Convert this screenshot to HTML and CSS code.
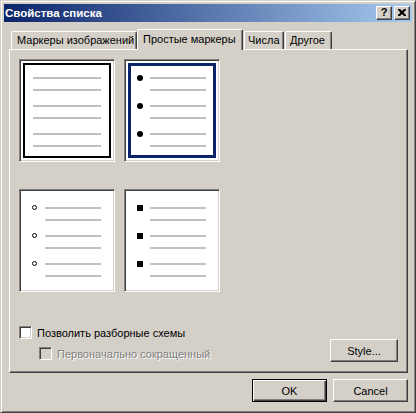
FILE: index.html
```html
<!DOCTYPE html>
<html lang="ru">
<head>
    <meta charset="UTF-8">
    <title>Свойства списка</title>
    <link rel="stylesheet" href="styles.css">
</head>
<body>
    <div class="window">
        <div class="titlebar">
            <span class="title">Свойства списка</span>
            <div class="caption-btns">
                <span class="cap-btn">?</span>
                <span class="cap-btn">
                    <svg width="8" height="7" viewBox="0 0 8 7"><path d="M0 0h2l2 2 2-2h2v1l-2.5 2.5 2.5 2.5v1h-2l-2-2-2 2h-2v-1l2.5-2.5-2.5-2.5z" fill="#000"/></svg>
                </span>
            </div>
        </div>

        <div class="client">
            <div class="tabs">
                <div class="tab tab-1">Маркеры изображений</div>
                <div class="tab tab-2 active">Простые маркеры</div>
                <div class="tab tab-3">Числа</div>
                <div class="tab tab-4">Другое</div>
            </div>

            <div class="panel">
                <div class="previews">
                    <div class="preview focus">
                        <div class="frame">
                            <div class="group"><span class="line"></span><span class="line"></span></div>
                            <div class="group"><span class="line"></span><span class="line"></span></div>
                            <div class="group"><span class="line"></span><span class="line"></span></div>
                        </div>
                    </div>
                    <div class="preview selected">
                        <div class="frame bulleted">
                            <div class="group"><span class="mark dot"></span><span class="line"></span><span class="line"></span></div>
                            <div class="group"><span class="mark dot"></span><span class="line"></span><span class="line"></span></div>
                            <div class="group"><span class="mark dot"></span><span class="line"></span><span class="line"></span></div>
                        </div>
                    </div>
                    <div class="preview">
                        <div class="frame bulleted">
                            <div class="group"><span class="mark ring"></span><span class="line"></span><span class="line"></span></div>
                            <div class="group"><span class="mark ring"></span><span class="line"></span><span class="line"></span></div>
                            <div class="group"><span class="mark ring"></span><span class="line"></span><span class="line"></span></div>
                        </div>
                    </div>
                    <div class="preview">
                        <div class="frame bulleted">
                            <div class="group"><span class="mark square"></span><span class="line"></span><span class="line"></span></div>
                            <div class="group"><span class="mark square"></span><span class="line"></span><span class="line"></span></div>
                            <div class="group"><span class="mark square"></span><span class="line"></span><span class="line"></span></div>
                        </div>
                    </div>
                </div>

                <div class="options">
                    <div class="checks">
                        <label class="check"><span class="box"></span>Позволить разборные схемы</label>
                        <label class="check sub disabled"><span class="box"></span>Первоначально сокращенный</label>
                    </div>
                    <button class="btn style-btn">Style...</button>
                </div>
            </div>

            <div class="footer">
                <button class="btn default">OK</button>
                <button class="btn">Cancel</button>
            </div>
        </div>
    </div>
</body>
</html>
```

FILE: styles.css
```css
:root {
    --face: #d4d0c8;
    --shadow: #808080;
    --dark: #404040;
    --light: #ffffff;
    --navy: #0a246a;
    --line: #c0c0c0;
}

* {
    margin: 0;
    padding: 0;
    box-sizing: border-box;
}

body {
    font-family: "Liberation Sans", Arial, sans-serif;
    font-size: 11px;
    color: #000;
    background: var(--face);
}

.window {
    width: 416px;
    height: 413px;
    background: var(--face);
    border: 1px solid;
    border-color: var(--face) var(--dark) var(--dark) var(--face);
    box-shadow: inset 1px 1px var(--light), inset -1px -1px var(--shadow);
    padding: 3px;
    display: flex;
    flex-direction: column;
}

/* заголовок окна */
.titlebar {
    height: 18px;
    background: linear-gradient(to right, var(--navy), #a6caf0);
    display: flex;
    align-items: center;
    justify-content: space-between;
    padding: 0 2px 0 1px;
}

.title {
    color: #fff;
    font-weight: bold;
    font-size: 11.5px;
}

.caption-btns {
    display: flex;
    gap: 2px;
}

.cap-btn {
    width: 16px;
    height: 14px;
    background: var(--face);
    border: 1px solid;
    border-color: var(--light) var(--dark) var(--dark) var(--light);
    box-shadow: inset -1px -1px var(--shadow);
    display: flex;
    align-items: center;
    justify-content: center;
    font-weight: bold;
    font-size: 11px;
    line-height: 1;
    padding-bottom: 1px;
}

.client {
    flex: 1;
    padding: 7px 4px 0 5px;
    display: flex;
    flex-direction: column;
}

/* вкладки */
.tabs {
    display: flex;
    height: 20px;
    padding-left: 2px;
    position: relative;
    z-index: 1;
}

.tab {
    margin-top: 2px;
    height: 18px;
    background: var(--face);
    border-top: 1px solid var(--light);
    border-left: 1px solid var(--light);
    border-right: 1px solid var(--dark);
    box-shadow: inset -1px 0 var(--shadow);
    border-radius: 2px 2px 0 0;
    padding: 2px 0 0 5px;
    white-space: nowrap;
}

.tab-1 { width: 126px; }
.tab-2 { width: 106px; }
.tab-3 { width: 40px; margin-left: 1px; padding-left: 3px; }
.tab-4 { width: 47px; margin-left: 1px; padding-left: 4px; }

.tab.active {
    margin-top: 0;
    height: 21px;
    padding-top: 3px;
}

/* панель вкладки */
.panel {
    height: 324px;
    border: 1px solid;
    border-color: var(--light) var(--dark) var(--dark) var(--light);
    box-shadow: inset -1px -1px var(--shadow);
    padding: 9px 9px 10px 9px;
    display: flex;
    flex-direction: column;
}

.previews {
    display: grid;
    grid-template-columns: 96px 96px;
    grid-auto-rows: 103px;
    column-gap: 9px;
    row-gap: 27px;
}

.preview {
    background: #fff;
    border: 1px solid;
    border-color: var(--shadow) var(--light) var(--light) var(--shadow);
    box-shadow: inset 1px 1px var(--dark), inset -1px -1px var(--face);
    padding: 1px;
    display: flex;
}

.frame {
    flex: 1;
    margin: 2px;
    border: 2px solid transparent;
    padding: 12px 0 0 8px;
    display: flex;
    flex-direction: column;
    gap: 14px;
}

.focus .frame {
    border-color: #000;
}

.selected .frame {
    border: 3px solid var(--navy);
    padding: 11px 0 0 6px;
}

.group {
    display: grid;
    grid-template-columns: 68px;
    row-gap: 10px;
}

.line {
    display: block;
    height: 2px;
    background: var(--line);
}

.bulleted {
    padding-left: 7px;
}

.selected .bulleted {
    padding-left: 6px;
}

.bulleted .group {
    grid-template-columns: 13px 56px;
}

.bulleted .line {
    grid-column: 2;
}

.mark {
    grid-row: 1;
    grid-column: 1;
    align-self: center;
}

.dot {
    width: 6px;
    height: 6px;
    margin: -2px 0;
    border-radius: 50%;
    background: #000;
}

.ring {
    width: 5px;
    height: 5px;
    margin: -2px 0 -1px;
    border-radius: 50%;
    border: 1px solid #000;
}

.square {
    width: 6px;
    height: 6px;
    margin: -2px 0;
    background: #000;
}

/* флажки и кнопка Style */
.options {
    margin-top: 34px;
    display: flex;
    justify-content: space-between;
    align-items: flex-start;
}

.checks {
    display: flex;
    flex-direction: column;
    gap: 8px;
}

.check {
    display: flex;
    align-items: center;
    gap: 5px;
    height: 13px;
}

.check.sub {
    padding-left: 20px;
}

.box {
    width: 13px;
    height: 13px;
    background: #fff;
    border: 1px solid;
    border-color: var(--shadow) var(--light) var(--light) var(--shadow);
    box-shadow: inset 1px 1px var(--dark), inset -1px -1px var(--face);
}

.disabled {
    color: var(--shadow);
    text-shadow: 1px 1px var(--light);
}

.disabled .box {
    background: var(--face);
}

.btn {
    font-family: inherit;
    font-size: 11px;
    color: #000;
    width: 75px;
    height: 23px;
    background: var(--face);
    border: 1px solid;
    border-color: var(--light) var(--dark) var(--dark) var(--light);
    box-shadow: inset -1px -1px var(--shadow);
}

.style-btn {
    width: 68px;
    margin-top: 13px;
}

.btn.default {
    border: 1px solid #000;
    box-shadow: inset 1px 1px var(--light), inset -1px -1px var(--dark), inset -2px -2px var(--shadow);
}

.footer {
    margin-top: 6px;
    display: flex;
    justify-content: flex-end;
    gap: 6px;
}
```
